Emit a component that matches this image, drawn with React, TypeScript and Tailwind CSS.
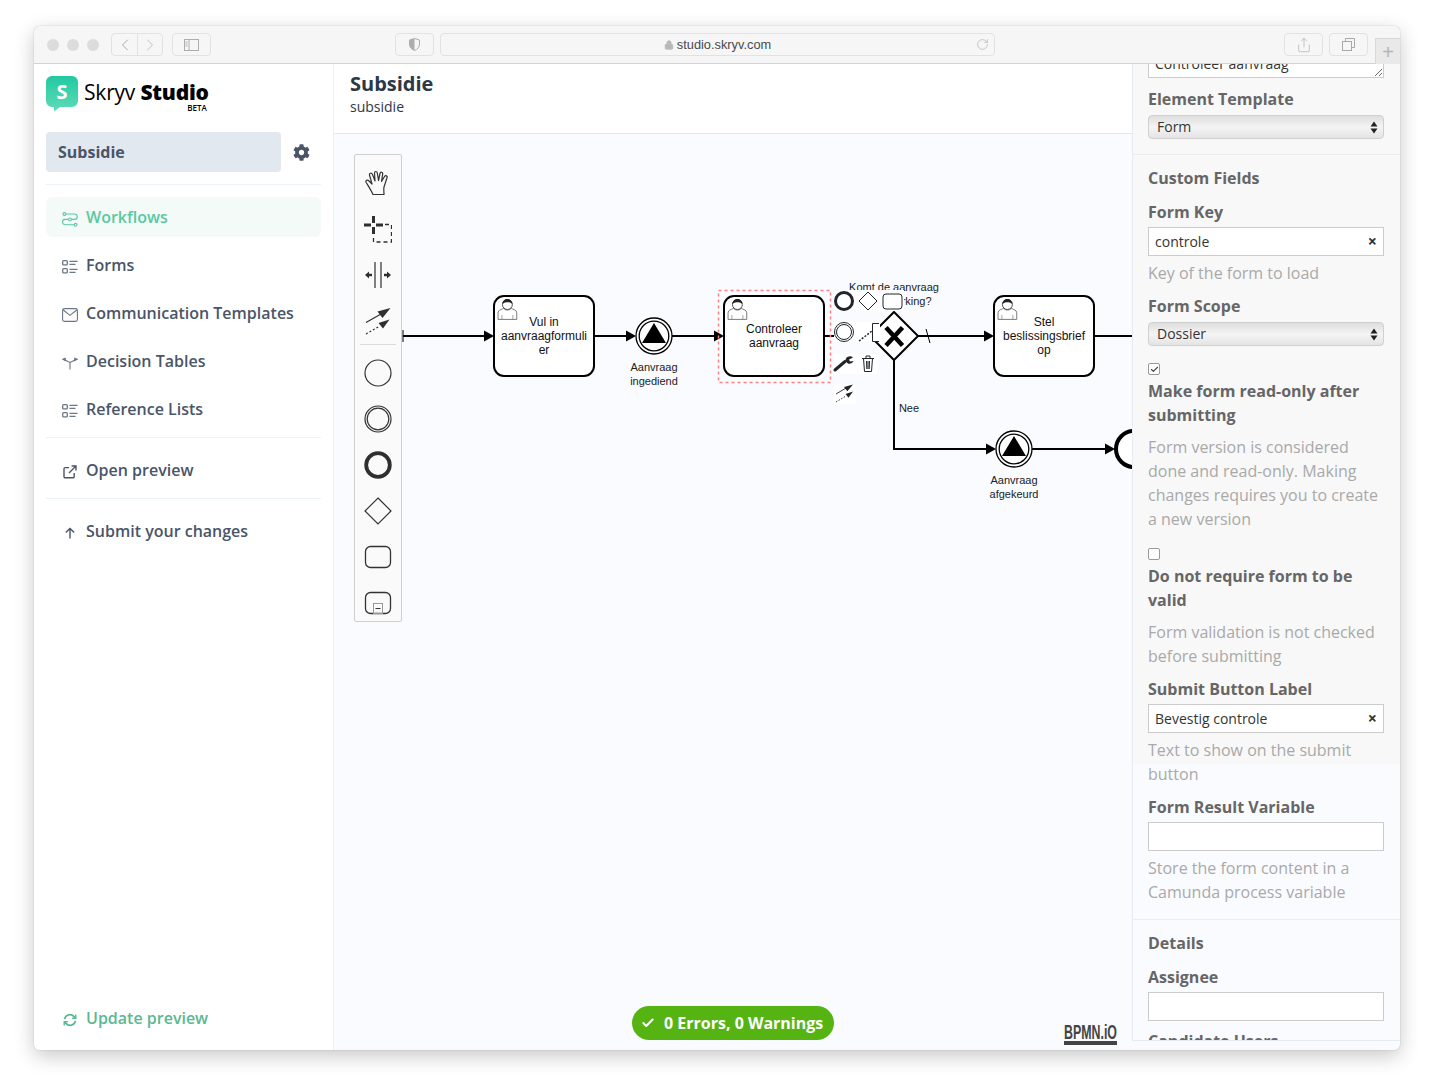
import { Check, ChevronLeft, ChevronRight, Share, RotateCw, Lock } from 'lucide-react'
import { FaCog } from 'react-icons/fa'

const ListIcon = () => (
  <svg width="16" height="14" viewBox="0 0 16 14" fill="none" stroke="currentColor" strokeWidth="1.3">
    <rect x="0.700" y="0.700" width="4.600" height="4.200" rx="0.900" />
    <rect x="0.700" y="8.700" width="4.600" height="4.200" rx="0.900" />
    <path d="M7.500 1.400h8M7.500 4.400h6M7.500 9.400h8M7.500 12.400h6" />
  </svg>
)

const WorkflowIcon = () => (
  <svg width="16" height="15" viewBox="0 0 16 15" fill="none" stroke="currentColor" strokeWidth="1.1">
    <circle cx="2.400" cy="2" r="1.400" />
    <circle cx="8" cy="7.400" r="1.400" />
    <circle cx="13.600" cy="12.800" r="1.400" />
    <path d="M4 2h8.500a2.700 2.700 0 0 1 0 5.400H9.600M6.400 7.400H3.200a2.700 2.700 0 0 0 0 5.400H12" />
  </svg>
)

const MailIcon = () => (
  <svg width="16" height="14" viewBox="0 0 16 14" fill="none" stroke="currentColor" strokeWidth="1.100">
    <rect x="0.600" y="0.600" width="14.800" height="12.800" rx="1.800" />
    <path d="M1 1.800l7 5.600 7-5.600" />
  </svg>
)

const BranchIcon = () => (
  <svg width="16" height="14" viewBox="0 0 16 14" fill="none" stroke="currentColor" strokeWidth="1.100">
    <path d="M8 13.500V6.500L2.500 3.800M8 6.500l5.500-2.700" />
    <path d="M0.800 3.200l2.400-1 .2 2.400zM15.200 3.200l-2.400-1-.2 2.400z" fill="currentColor" />
  </svg>
)

const ExternalIcon = () => (
  <svg width="14" height="14" viewBox="0 0 14 14" fill="none" stroke="currentColor" strokeWidth="1.400">
    <path d="M6 2.600H2.200a1.200 1.200 0 0 0-1.200 1.200v7.800A1.200 1.200 0 0 0 2.200 12.800H10a1.200 1.200 0 0 0 1.200-1.200V8" />
    <path d="M6 8l7-7M8.600 1H13v4.400" />
  </svg>
)

const ArrowUpIcon = () => (
  <svg width="12" height="12" viewBox="0 0 12 12" fill="none" stroke="currentColor" strokeWidth="1.400">
    <path d="M6 11.400V1.600M1.800 5.600L6 1.400l4.200 4.200" />
  </svg>
)

const RefreshIcon = () => (
  <svg width="16" height="14" viewBox="0 0 16 14" fill="none" stroke="currentColor" strokeWidth="1.800">
    <path d="M2.600 6.200A5.400 5.400 0 0 1 12 3.600l1 1.400M13.400 7.800A5.400 5.400 0 0 1 4 10.400L3 9" />
    <path d="M13.800 1.400V5.400H10M2.200 12.600V8.600H6" strokeWidth="1.400" />
  </svg>
)

const navItems = [
  { label: 'Forms', icon: <ListIcon /> },
  { label: 'Communication Templates', icon: <MailIcon /> },
  { label: 'Decision Tables', icon: <BranchIcon /> },
  { label: 'Reference Lists', icon: <ListIcon /> },
]

const ChromeButton = ({ className, children }: { className: string; children?: React.ReactNode }) => (
  <div className={`h-[23px] border border-[#e2e2e2] rounded-[4px] flex items-center justify-center text-[#aaa] ${className}`}>
    {children}
  </div>
)

const TitleBar = () => (
  <div className="h-[38px] shrink-0 bg-[#f6f6f6] border-b border-[#d2d2d2] flex items-start pt-[7px] relative">
    <div className="flex gap-2 ml-[13px] mt-[6px]">
      <div className="w-3 h-3 rounded-full bg-[#dcdcdc]" />
      <div className="w-3 h-3 rounded-full bg-[#dcdcdc]" />
      <div className="w-3 h-3 rounded-full bg-[#dcdcdc]" />
    </div>
    <ChromeButton className="w-[27px] ml-[12px] rounded-r-none">
      <ChevronLeft size={20} strokeWidth={1.200} />
    </ChromeButton>
    <ChromeButton className="w-[26px] -ml-px rounded-l-none">
      <ChevronRight size={20} strokeWidth={1.200} className="text-[#c0c0c0]" />
    </ChromeButton>
    <ChromeButton className="w-[39px] ml-[9px]">
      <svg width="15" height="12" viewBox="0 0 15 12" fill="none" stroke="#adadad">
        <rect x="0.500" y="0.500" width="14" height="11" />
        <path d="M5 0.500v11M1.500 3h2M1.500 5h2M1.500 7h2" />
      </svg>
    </ChromeButton>
    <ChromeButton className="w-[39px] ml-[184px]">
      <svg width="11" height="13" viewBox="0 0 11 13">
        <path d="M5.500 0.500L10.500 2v4c0 3-2 5.400-5 6.500C2.500 11.400 0.500 9 0.500 6V2z" fill="none" stroke="#adadad" />
        <path d="M5.500 0.500L0.500 2v4c0 3 2 5.400 5 6.500z" fill="#adadad" />
      </svg>
    </ChromeButton>
    <div className="w-[555px] h-[23px] ml-[6px] border border-[#e2e2e2] rounded-[4px] flex items-center justify-center relative font-['Liberation_Sans',sans-serif] text-[12.800px] text-[#4a4a4a]">
      <Lock size={10} className="text-[#b8b8b8] fill-[#b8b8b8] mr-[3px]" />
      studio.skryv.com
      <RotateCw size={13} strokeWidth={1.100} className="absolute right-[5px] top-[4px] text-[#a8a8a8]" />
    </div>
    <ChromeButton className="w-[39px] ml-[289px]">
      <Share size={16} strokeWidth={1} />
    </ChromeButton>
    <ChromeButton className="w-[39px] ml-[6px]">
      <svg width="13" height="13" viewBox="0 0 13 13" fill="none" stroke="#a8a8a8">
        <rect x="0.500" y="3.500" width="9" height="9" />
        <path d="M3.500 3.500V0.500h9V9.500H9.500" />
      </svg>
    </ChromeButton>
    <div className="w-[25px] h-[26px] ml-[7px] mt-[5px] bg-[#e9e9e9] border-l border-t border-[#d8d8d8] flex items-center justify-center text-[#b4b4b4] text-[20px] font-light font-['Liberation_Sans',sans-serif]">
      +
    </div>
  </div>
)

const navRow = "flex items-center px-4 font-['Open_Sans',sans-serif] text-[16px] font-semibold"

const Sidebar = () => (
  <aside className="w-[300px] shrink-0 bg-white border-r border-[#edf2f7] flex flex-col pl-3 pr-3 text-[#4a5568]">
    <div className="flex items-start mt-3 h-[56px]">
      <svg width="32" height="36" viewBox="0 0 32 36" className="shrink-0">
        <defs>
          <linearGradient id="logoFill" x1="0" y1="0" x2="0" y2="1">
            <stop offset="0" stopColor="#22c8a0" />
            <stop offset="1" stopColor="#5fdcb8" />
          </linearGradient>
        </defs>
        <path d="M6 0h20a6 6 0 0 1 6 6v19a6 6 0 0 1-6 6H14l-6 4.500V31H6a6 6 0 0 1-6-6V6a6 6 0 0 1 6-6z" fill="url(#logoFill)" />
        <text x="16" y="23" textAnchor="middle" fill="#fff" fontSize="20" fontWeight="700" fontFamily="Open Sans, sans-serif">S</text>
      </svg>
      <div className="ml-[6px] relative text-black font-['Open_Sans',sans-serif] text-[21px] leading-[24px] mt-[4px] whitespace-nowrap tracking-[-0.2px]">
        Skryv <span className="font-extrabold">Studio</span>
        <span className="absolute right-[2px] top-[24px] text-[8px] leading-[7px] tracking-normal font-semibold">BETA</span>
      </div>
    </div>
    <div className="flex items-center mb-3 font-['Open_Sans',sans-serif]">
      <div className="w-[235px] h-10 bg-[#e2e8f0] rounded-[4px] flex items-center pl-3 text-[16px] font-bold">Subsidie</div>
      <FaCog size={17} className="ml-[12px]" />
    </div>
    <div className="border-t border-[#edf2f7] mb-3" />
    <nav className="flex flex-col gap-2">
      <div className={`h-10 bg-[#f3faf7] rounded-md text-[#5bc8a0] ${navRow}`}>
        <span className="w-6 flex translate-y-[2px]"><WorkflowIcon /></span>Workflows
      </div>
      {navItems.map((item) => (
        <div key={item.label} className={`h-10 ${navRow}`}>
          <span className="w-6 flex text-[#6b7688] translate-y-[2px]">{item.icon}</span>{item.label}
        </div>
      ))}
    </nav>
    <div className="border-t border-[#edf2f7] mt-2" />
    <div className={`h-10 mt-3 ${navRow}`}>
      <span className="w-6 flex translate-y-[2px] pl-[1px]"><ExternalIcon /></span>Open preview
    </div>
    <div className="border-t border-[#edf2f7] mt-2" />
    <div className={`h-10 mt-3 ${navRow}`}>
      <span className="w-6 flex translate-y-[2px] pl-[2px]"><ArrowUpIcon /></span>Submit your changes
    </div>
    <div className={`h-10 mt-auto mb-3 text-[#5ab892] ${navRow}`}>
      <span className="w-6 flex translate-y-[2px]"><RefreshIcon /></span>Update preview
    </div>
  </aside>
)

const PaletteItem = ({ children }: { children: React.ReactNode }) => (
  <div className="h-[46px] shrink-0 flex items-center justify-center">{children}</div>
)

const Palette = () => (
  <div className="absolute left-5 top-5 w-12 h-[468px] bg-[#fafafa] border border-[#cfcfcf] rounded-[2px] pt-[5px] flex flex-col text-[#333]">
    <PaletteItem>
      <svg width="26" height="26" viewBox="0 0 26 26" fill="none" stroke="#333" strokeWidth="1.200" strokeLinejoin="round">
        <path d="M8 24.500C6 20 3 15.500 1.200 12.500 0.200 10.500 2.200 9.200 4 11L7 14 4.500 5C4 3 6.500 2.500 7.500 4.500L10 11 9.500 3C9.500 1 12 1 12.300 3L13.500 10.500 15 3.500C15.500 1.500 18 2 17.700 4L16.500 11.500 19.500 6.500C20.500 5 22.800 5.800 22 7.800L19 17C18.500 19 19 22 19 24.500z" />
      </svg>
    </PaletteItem>
    <PaletteItem>
      <svg width="28" height="28" viewBox="0 0 28 28" fill="none" stroke="#2f2f2f">
        <path d="M0 10H7M12 10H19M9.500 1V8M9.500 12V19" strokeWidth="3" />
        <path d="M21 9.500H27.500V27H9.500V21" strokeWidth="1.300" strokeDasharray="4 3" />
      </svg>
    </PaletteItem>
    <PaletteItem>
      <svg width="28" height="26" viewBox="0 0 28 26" fill="#2f2f2f">
        <path d="M11 0v26M17 0v26" fill="none" stroke="#2f2f2f" strokeWidth="1.200" />
        <path d="M1 13l4-3.500v2.300h3v2.400H5v2.300zM27 13l-4 3.500v-2.300h-3v-2.400h3V9.500z" />
      </svg>
    </PaletteItem>
    <PaletteItem>
      <svg width="27" height="28" viewBox="0 0 27 28" fill="#2f2f2f">
        <path d="M1 15.500L16 7" fill="none" stroke="#2f2f2f" strokeWidth="1.200" />
        <path d="M25.500 1L12.500 4.500l5 6.500zM24.500 12.500L13.500 16l4.500 5.500z" />
        <path d="M1 27l13-7.500" fill="none" stroke="#2f2f2f" strokeWidth="1.200" strokeDasharray="2 2" />
      </svg>
    </PaletteItem>
    <div className="h-px bg-[#dcdcdc] mx-[5px] mb-[5px] shrink-0" />
    <PaletteItem>
      <svg width="28" height="28" viewBox="0 0 28 28" fill="none" stroke="#333" strokeWidth="1.200"><circle cx="14" cy="14" r="13" /></svg>
    </PaletteItem>
    <PaletteItem>
      <svg width="28" height="28" viewBox="0 0 28 28" fill="none" stroke="#333" strokeWidth="1.200">
        <circle cx="14" cy="14" r="13" />
        <circle cx="14" cy="14" r="10.800" />
      </svg>
    </PaletteItem>
    <PaletteItem>
      <svg width="28" height="28" viewBox="0 0 28 28" fill="none" stroke="#2f2f2f" strokeWidth="3.800"><circle cx="14" cy="14" r="11.800" /></svg>
    </PaletteItem>
    <PaletteItem>
      <svg width="28" height="28" viewBox="0 0 28 28" fill="none" stroke="#333" strokeWidth="1.200"><path d="M14 1l13 13-13 13L1 14z" /></svg>
    </PaletteItem>
    <PaletteItem>
      <svg width="28" height="24" viewBox="0 0 28 24" fill="none" stroke="#333" strokeWidth="1.300"><rect x="1.500" y="1.500" width="25" height="21" rx="5" /></svg>
    </PaletteItem>
    <PaletteItem>
      <svg width="28" height="24" viewBox="0 0 28 24" fill="none" stroke="#333" strokeWidth="1.300">
        <rect x="1.500" y="1.500" width="25" height="21" rx="5" />
        <rect x="9.500" y="12.500" width="9" height="10" stroke="#999" strokeWidth="1" />
        <path d="M11.500 17.500h5" strokeWidth="1" />
      </svg>
    </PaletteItem>
  </div>
)

const UserIcon = ({ x, y }: { x: number; y: number }) => (
  <g transform={`translate(${x} ${y}) scale(1.100)`}>
    <path d="M0.500 19v-6c0-2.500 3-3 5-4 2 2 5 2 7 0 2 1 5 1.500 5 4v6z" fill="#fff" stroke="#555" strokeWidth="0.700" />
    <circle cx="9" cy="5.500" r="4.500" fill="#fff" stroke="#333" strokeWidth="0.800" />
    <path d="M4.500 5c0-6 9-6 9 0-2-1.500-3-1.500-4.500-1.500S6.500 3.500 4.500 5z" fill="#222" />
    <path d="M4 19v-4M14 19v-4" stroke="#777" strokeWidth="0.600" />
  </g>
)

const Task = ({ x, lines, firstY }: { x: number; lines: string[]; firstY: number }) => (
  <g>
    <rect x={x} y={296} width={100} height={80} rx={10} fill="#fff" stroke="#000" strokeWidth={2} />
    <UserIcon x={x + 3.500} y={298.500} />
    {lines.map((line, i) => (
      <text key={line} x={x + 50} y={firstY + i * 14} textAnchor="middle" fontSize={12} fill="#111">{line}</text>
    ))}
  </g>
)

const Arrow = ({ x, y }: { x: number; y: number }) => <path d={`M${x} ${y}l-10 -5.500v11z`} fill="#000" />

const ThrowEvent = ({ cx, cy }: { cx: number; cy: number }) => (
  <g>
    <circle cx={cx} cy={cy} r={18} fill="#fff" stroke="#000" strokeWidth={1.300} />
    <circle cx={cx} cy={cy} r={14.800} fill="#fff" stroke="#000" strokeWidth={1.300} />
    <path d={`M${cx} ${cy - 13}l12 20h-24z`} fill="#000" />
  </g>
)

const Diagram = () => (
  <svg className="absolute inset-0 w-full h-full" viewBox="334 134 798 916" fontFamily="Liberation Sans, Arial, sans-serif">
    <g stroke="#000" strokeWidth={2} fill="none">
      <path d="M403 336H486M594 336H626M672 336H714M824 336H834M918 336H984M1094 336H1132M894 360V449H986M1032 449H1106" />
      <path d="M926 329L930 343" strokeWidth={1} />
      <path d="M403 330V342" strokeWidth={1} />
    </g>
    <Arrow x={494} y={336} />
    <Arrow x={636} y={336} />
    <Arrow x={724} y={336} />
    <Arrow x={994} y={336} />
    <Arrow x={996} y={449} />
    <Arrow x={1115} y={449} />

    <Task x={494} lines={['Vul in', 'aanvraagformuli', 'er']} firstY={326} />
    <Task x={724} lines={['Controleer', 'aanvraag']} firstY={333} />
    <Task x={994} lines={['Stel', 'beslissingsbrief', 'op']} firstY={326} />
    <rect x={718.500} y={290.500} width={112} height={92} fill="none" stroke="#ff8080" strokeWidth={1.500} strokeDasharray="3 3" />

    <ThrowEvent cx={654} cy={336} />
    <ThrowEvent cx={1014} cy={449} />
    <circle cx={1134} cy={449} r={18} fill="#fff" stroke="#000" strokeWidth={4} />

    <g fontSize={11} fill="#222" textAnchor="middle">
      <text x={654} y={371}>Aanvraag</text>
      <text x={654} y={385}>ingediend</text>
      <text x={1014} y={484}>Aanvraag</text>
      <text x={1014} y={498}>afgekeurd</text>
      <text x={909} y={412}>Nee</text>
      <text x={894} y={291}>Komt de aanvraag</text>
      <text x={894} y={305}>in aanmerking?</text>
    </g>

    <path d="M894 312L918 336L894 360L870 336z" fill="#fff" stroke="#000" strokeWidth={2} />
    <path d="M886 327.500L902.500 345.500M902.500 327.500L886 345.500" stroke="#000" strokeWidth={4.500} fill="none" />

    {/* context pad */}
    <rect x={834} y={290} width={70} height={21} fill="#fff" />
    <rect x={834} y={322} width={46} height={20} fill="#fff" />
    <rect x={834} y={354} width={44} height={20} fill="#fff" />
    <rect x={834} y={384} width={22} height={20} fill="#fff" />
    <circle cx={844} cy={301} r={8.500} fill="none" stroke="#22242a" strokeWidth={3} />
    <path d="M868 292l9 9-9 9-9-9z" fill="none" stroke="#22242a" strokeWidth={1} />
    <rect x={883} y={294} width={19} height={15} rx={3} fill="none" stroke="#22242a" strokeWidth={1} />
    <circle cx={844} cy={332} r={9.500} fill="none" stroke="#22242a" strokeWidth={1} />
    <circle cx={844} cy={332} r={7.500} fill="none" stroke="#22242a" strokeWidth={1} />
    <path d="M859 341L872 331" stroke="#22242a" strokeWidth={1.500} strokeDasharray="2 1.500" />
    <path d="M879 323.500H872.500V341.500H879" stroke="#22242a" strokeWidth={1} fill="#fff" />
    <path d="M835 370L845 361.500" stroke="#22242a" strokeWidth={3} strokeLinecap="round" />
    <path d="M853 357.500a4.500 4.500 0 0 0-7.500 4l2.500 2a4.500 4.500 0 0 0 5.500-2.500l-3.500 0.500-1-2z" fill="#22242a" />
    <path d="M862 358.500H874M866 358v-2h4v2M863.500 358.500l1 13h7l1-13M866.500 361l0.300 8M868 361v8M869.500 361l-0.300 8" fill="none" stroke="#22242a" strokeWidth={1} />
    <path d="M836 394L846 388" stroke="#22242a" strokeWidth={0.900} />
    <path d="M853 384.500l-9 2.500 3.300 4.200zM853 391.500l-7.500 2.500 3 3.700z" fill="#22242a" />
    <path d="M836 402L846 396" stroke="#22242a" strokeWidth={0.900} strokeDasharray="1.500 1.500" />

    <text x={1064} y={1039} fontSize={21} fontWeight={700} fill="#444" textLength={53} lengthAdjust="spacingAndGlyphs">BPMN.iO</text>
    <rect x={1064} y={1041} width={53} height={4} fill="#444" />
  </svg>
)

const Label = ({ className = '', children }: { className?: string; children: React.ReactNode }) => (
  <div className={`text-[16px] leading-6 font-bold text-[#666] ${className}`}>{children}</div>
)

const Hint = ({ className = '', children }: { className?: string; children: React.ReactNode }) => (
  <div className={`text-[16px] leading-6 text-[#a9a9a9] ${className}`}>{children}</div>
)

const TextField = ({ value = '', className = '' }: { value?: string; className?: string }) => (
  <div className={`relative h-[29px] ${className}`}>
    <input
      readOnly
      value={value}
      className="w-full h-full bg-white border border-[#ccc] pl-[6px] pr-6 text-[14px] text-[#333] outline-none"
    />
    {value && <span className="absolute right-[7px] top-[6px] text-[16px] leading-4 font-bold text-[#333]">×</span>}
  </div>
)

const SelectBox = ({ value, className = '' }: { value: string; className?: string }) => (
  <div className={`h-6 rounded-[4px] border border-[#d0d0d0] bg-gradient-to-b from-[#dedede] via-[#f4f4f4] to-[#e4e4e4] flex items-center justify-between pl-2 pr-[5px] text-[14px] text-[#333] ${className}`}>
    <span className="-translate-y-px">{value}</span>
    <svg width="8" height="13" viewBox="0 0 8 13" fill="#222"><path d="M4 0.500l3.500 5h-7zM4 12.500l3.500-5h-7z" /></svg>
  </div>
)

const CheckBox = ({ checked, className = '' }: { checked?: boolean; className?: string }) => (
  <div className={`w-[12px] h-[12px] border border-[#999] rounded-[2px] bg-white flex items-center justify-center ${className}`}>
    {checked && <Check size={9} strokeWidth={3} className="text-[#444]" />}
  </div>
)

const PropertiesPanel = () => (
  <aside className="w-[268px] shrink-0 h-[977px] overflow-hidden border-l border-b border-[#e6eaf2] font-['Open_Sans',sans-serif] bg-[#f9fbff]">
    <div className="h-[700px] flow-root bg-[#f8f8f8] px-[15px]">
      <textarea
        readOnly
        value="Controleer aanvraag"
        className="block w-[236px] h-[44px] -mt-[30px] bg-white border border-[#ccc] px-[6px] pt-[19px] text-[14px] leading-[20px] text-[#333] outline-none"
      />
      <Label className="mt-[9px]">Element Template</Label>
      <SelectBox value="Form" className="mt-1 w-[236px]" />
      <div className="border-t border-[#ececec] -mx-[15px] mt-[15px]" />
      <Label className="mt-[11px]">Custom Fields</Label>
      <Label className="mt-[10px]">Form Key</Label>
      <TextField value="controle" className="mt-[3px] w-[236px]" />
      <Hint className="mt-[5px]">Key of the form to load</Hint>
      <Label className="mt-[9px]">Form Scope</Label>
      <SelectBox value="Dossier" className="mt-1 w-[236px]" />
      <CheckBox checked className="mt-[17px]" />
      <Label className="mt-1">Make form read-only after submitting</Label>
      <Hint className="mt-2">Form version is considered done and read-only. Making changes requires you to create a new version</Hint>
      <CheckBox className="mt-[17px]" />
      <Label className="mt-1">Do not require form to be valid</Label>
      <Hint className="mt-2">Form validation is not checked before submitting</Hint>
      <Label className="mt-[9px]">Submit Button Label</Label>
      <TextField value="Bevestig controle" className="mt-[3px] w-[236px]" />
      <Hint className="mt-[5px]">Text to show on the submit button</Hint>
      <Label className="mt-[9px]">Form Result Variable</Label>
      <TextField className="mt-[3px] w-[236px]" />
      <Hint className="mt-[5px]">Store the form content in a Camunda process variable</Hint>
      <div className="border-t border-[#ececf2] -mx-[15px] mt-[15px]" />
      <Label className="mt-[11px]">Details</Label>
      <Label className="mt-[10px]">Assignee</Label>
      <TextField className="mt-[3px] w-[236px]" />
      <Label className="mt-2">Candidate Users</Label>
    </div>
  </aside>
)

export default function App() {
  return (
    <div className="w-[1434px] h-[1092px] bg-white pt-[26px] pl-[34px] overflow-hidden">
      <div className="w-[1366px] h-[1024px] rounded-[6px] overflow-hidden flex flex-col shadow-[0_0_1px_rgba(0,0,0,0.45),0_6px_20px_rgba(0,0,0,0.22)]">
        <TitleBar />
        <div className="flex-1 flex min-h-0 bg-[#f9fbff]">
          <Sidebar />
          <main className="flex-1 flex flex-col min-w-0 font-['Open_Sans',sans-serif]">
            <header className="h-[70px] shrink-0 bg-white border-b border-[#e2e8f0] pl-4 pt-[7px] text-[#2d3748]">
              <h1 className="text-[20px] leading-[26px] font-bold">Subsidie</h1>
              <p className="text-[14px] leading-5">subsidie</p>
            </header>
            <div className="flex-1 relative overflow-hidden">
              <Diagram />
              <Palette />
              <div className="absolute left-[298px] bottom-[10px] w-[202px] h-[34px] rounded-full bg-[#56b412] text-white flex items-center pl-[9px] gap-[9px] text-[16px] font-bold whitespace-nowrap">
                <Check size={14} strokeWidth={3.500} />
                0 Errors, 0 Warnings
              </div>
            </div>
          </main>
          <PropertiesPanel />
        </div>
      </div>
    </div>
  )
}
